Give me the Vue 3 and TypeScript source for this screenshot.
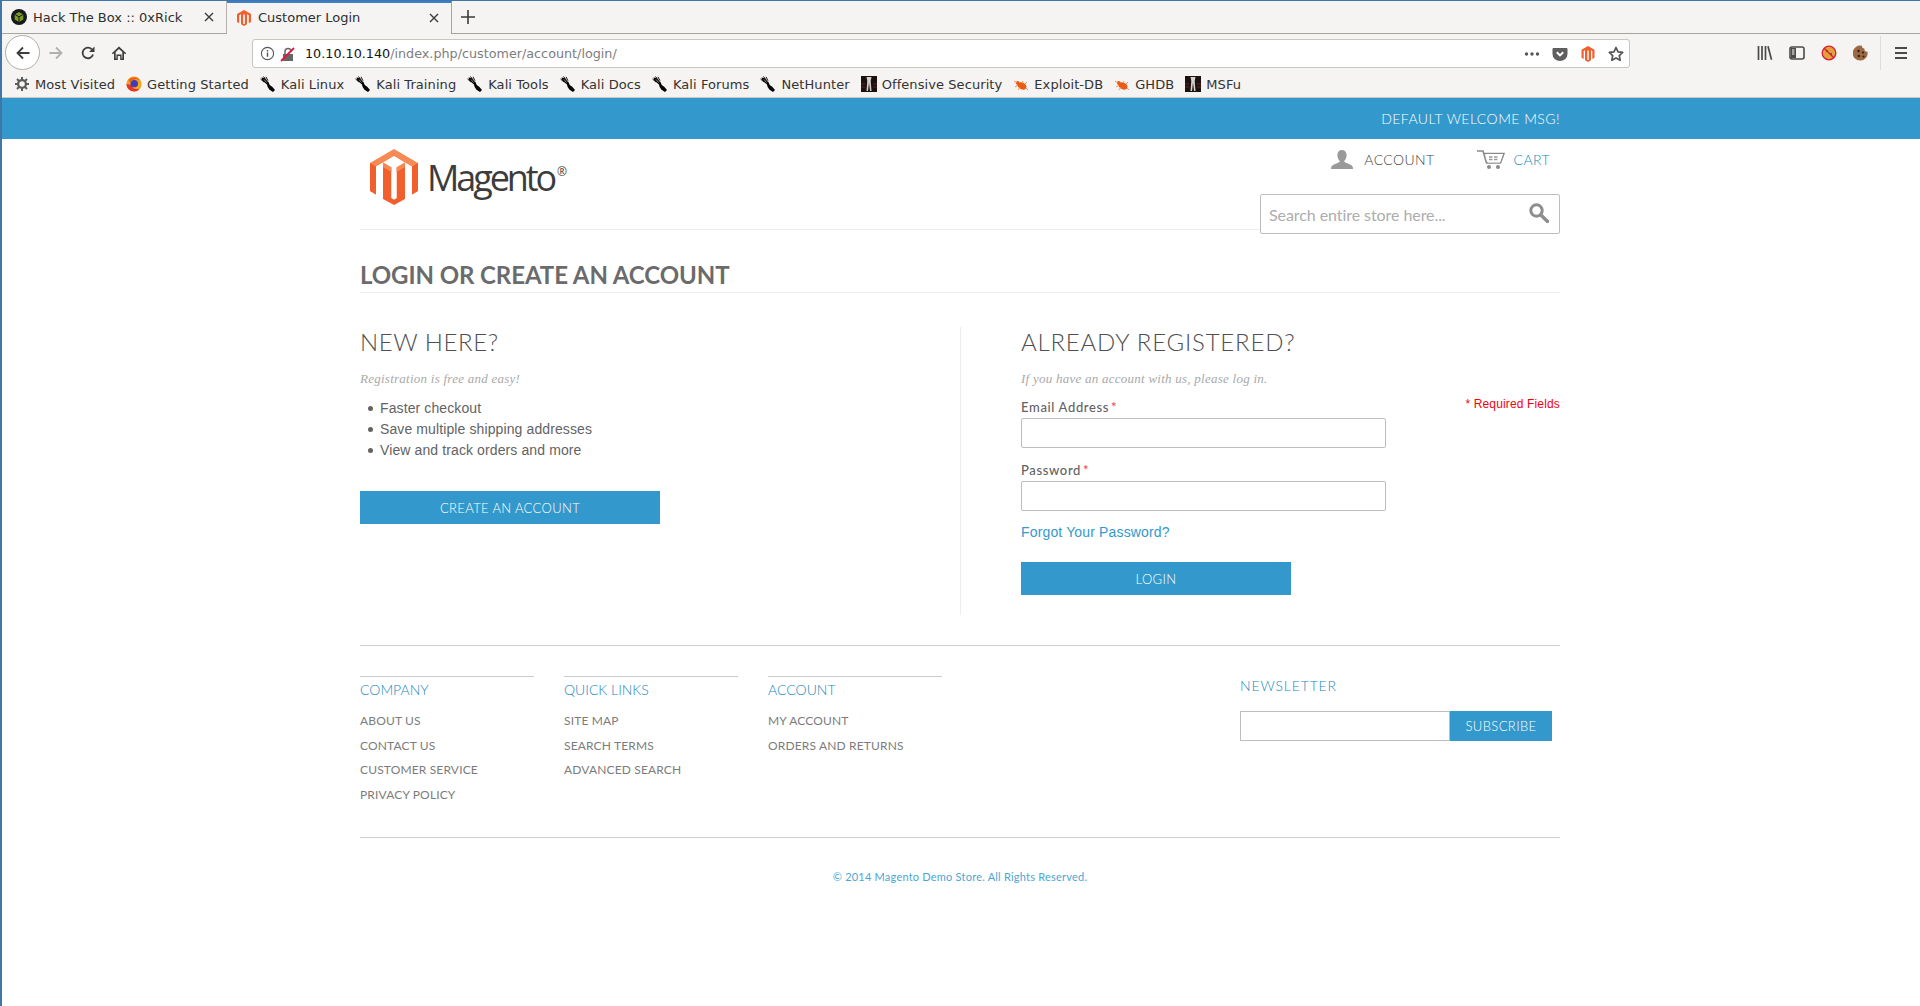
<script setup lang="ts">
const bookmarks = [
  { label: 'Kali Linux', icon: 'kali' },
  { label: 'Kali Training', icon: 'kali' },
  { label: 'Kali Tools', icon: 'kali' },
  { label: 'Kali Docs', icon: 'kali' },
  { label: 'Kali Forums', icon: 'kali' },
  { label: 'NetHunter', icon: 'kali' },
  { label: 'Offensive Security', icon: 'off' },
  { label: 'Exploit-DB', icon: 'bug' },
  { label: 'GHDB', icon: 'bug' },
  { label: 'MSFu', icon: 'off' }
]
const footerCols = [
  { title: 'COMPANY', links: ['ABOUT US', 'CONTACT US', 'CUSTOMER SERVICE', 'PRIVACY POLICY'] },
  { title: 'QUICK LINKS', links: ['SITE MAP', 'SEARCH TERMS', 'ADVANCED SEARCH'] },
  { title: 'ACCOUNT', links: ['MY ACCOUNT', 'ORDERS AND RETURNS'] }
]
</script>

<template>
  <div class="window">
    <div class="tabs">
      <div class="tab">
        <svg class="fav" viewBox="0 0 16 16"><circle cx="8" cy="8" r="8" fill="#151a1c"/><path d="M8 3l4.300 2.400v5.200L8 13l-4.300-2.400V5.400z" fill="#7f9a24"/><path d="M3.700 5.400L8 7.800l4.300-2.400M8 7.800V13" fill="none" stroke="#151a1c" stroke-width="1"/></svg>
        <span class="tab-title">Hack The Box :: 0xRick</span>
        <svg class="close" viewBox="0 0 10 10"><path d="M1 1l8 8M9 1l-8 8" stroke="#3b3b3b" stroke-width="1.400"/></svg>
      </div>
      <div class="tab active">
        <svg class="fav" viewBox="0 0 16 16"><path d="M8 0l7 4v8l-2.200 1.300V5.300L11 4.300v9.900L8 16l-3-1.800V4.300L3.200 5.300v8L1 12V4z" fill="#f1602c"/><path d="M7.200 4.500h1.600V14H7.200z" fill="#fff"/></svg>
        <span class="tab-title">Customer Login</span>
        <svg class="close" viewBox="0 0 10 10"><path d="M1 1l8 8M9 1l-8 8" stroke="#3b3b3b" stroke-width="1.400"/></svg>
      </div>
      <svg class="plus" viewBox="0 0 14 14"><path d="M7 0v14M0 7h14" stroke="#3b3b3b" stroke-width="1.600"/></svg>
    </div>

    <div class="toolbar">
      <div class="back">
        <svg viewBox="0 0 16 16" width="16" height="16"><path d="M14.500 8H2.500M8 2.500L2.500 8 8 13.500" fill="none" stroke="#3d3d3d" stroke-width="1.800"/></svg>
      </div>
      <svg class="tool fwd" viewBox="0 0 16 16"><path d="M1.500 8h12M8 2.500L13.500 8 8 13.500" fill="none" stroke="#b0b0b0" stroke-width="1.800"/></svg>
      <svg class="tool reload" viewBox="0 0 16 16"><path d="M13 9.500A5.300 5.300 0 1 1 11.800 4.300" fill="none" stroke="#3d3d3d" stroke-width="1.800"/><path d="M14.500 1.500V7H9z" fill="#3d3d3d"/></svg>
      <svg class="tool home" viewBox="0 0 16 16"><path d="M8 1.500L.8 8.200l1 1.100L3 8.200V15h3.800v-4h2.400v4H13V8.200l1.200 1.100 1-1.100z" fill="#3d3d3d"/><path d="M8 4L4.700 7v6.400h.7V9.500h5.200v3.900h.7V7z" fill="#f5f4f2"/></svg>
      <div class="urlbar">
        <svg class="uicon" viewBox="0 0 16 16"><circle cx="8" cy="8" r="6.500" fill="none" stroke="#555" stroke-width="1.200"/><path d="M8 7v4.500M8 4.200v1.600" stroke="#555" stroke-width="1.500"/></svg>
        <svg class="uicon lock" viewBox="0 0 16 16"><path d="M3 8h10v7H3z" fill="#666"/><path d="M5 8V5.500a3 3 0 0 1 6 0" fill="none" stroke="#666" stroke-width="1.500"/><path d="M1 15L14 2" stroke="#e0173f" stroke-width="1.800"/></svg>
        <span class="url"><span class="host">10.10.10.140</span><span class="path">/index.php/customer/account/login/</span></span>
        <span class="url-actions">
          <svg class="dots" viewBox="0 0 16 4"><circle cx="2.500" cy="2" r="1.700"/><circle cx="8" cy="2" r="1.700"/><circle cx="13.500" cy="2" r="1.700"/></svg>
          <svg class="uicon" viewBox="0 0 16 16"><path d="M1.500 2h13a1 1 0 0 1 1 1v5a7.500 7 0 0 1-15 0V3a1 1 0 0 1 1-1z" fill="#5f5f5f"/><path d="M4.800 6.200L8 9.400l3.200-3.200" fill="none" stroke="#fff" stroke-width="2"/></svg>
          <svg class="uicon" viewBox="0 0 16 16"><path d="M8 0l6.500 3.800v8L12.300 13V5.100L11 4.300v9.900L8 16l-3-1.800V4.300l-1.300.8V13l-2.200-1.200v-8z" fill="#f1602c"/><path d="M7.300 4.500h1.400V14H7.300z" fill="#fff"/></svg>
          <svg class="uicon" viewBox="0 0 16 16"><path d="M8 1.500l2 4.300 4.700.6-3.400 3.200.9 4.700L8 12l-4.200 2.300.9-4.700L1.300 6.400 6 5.800z" fill="none" stroke="#555" stroke-width="1.700" stroke-linejoin="round"/></svg>
        </span>
      </div>
      <div class="tool-right">
        <svg class="uicon" viewBox="0 0 16 16"><path d="M1.500 1v14M5 1v14M8.500 1v14" stroke="#4a4a4a" stroke-width="1.700"/><path d="M11 1.200l3.500 13.600" stroke="#4a4a4a" stroke-width="1.700"/></svg>
        <svg class="uicon" viewBox="0 0 16 16"><rect x="1" y="2" width="14" height="12" rx="2" fill="none" stroke="#4a4a4a" stroke-width="1.600"/><path d="M2 3h5v10H2z" fill="#4a4a4a"/><path d="M3 5h2.500M3 7h2.500M3 9h2.500" stroke="#fff"/></svg>
        <svg class="uicon" viewBox="0 0 16 16"><path d="M8 1.500a6.500 6.500 0 1 0 0 13 6.500 6.500 0 0 0 0-13z" fill="#e2a13c"/><circle cx="6" cy="6" r="1" fill="#6a3a10"/><circle cx="10" cy="9" r="1" fill="#6a3a10"/><circle cx="8" cy="8" r="6.800" fill="none" stroke="#d81e32" stroke-width="1.300"/><path d="M3.200 3.200l9.600 9.600" stroke="#d81e32" stroke-width="1.300"/></svg>
        <svg class="uicon" viewBox="0 0 16 16"><path d="M9 .8a2.500 2.500 0 0 0 2.500 2.800 2.500 2.500 0 0 0 3 3A7.500 7.500 0 1 1 9 .8z" fill="#9b6a45"/><circle cx="5.500" cy="6" r="1.200" fill="#2f1c10"/><circle cx="10" cy="7.500" r="1.100" fill="#2f1c10"/><circle cx="5.800" cy="11" r="1.200" fill="#2f1c10"/><circle cx="10.500" cy="11.500" r="1.100" fill="#2f1c10"/></svg>
        <i class="sep"></i>
        <svg class="uicon" viewBox="0 0 16 16"><path d="M2 3h12M2 8h12M2 13h12" stroke="#4a4a4a" stroke-width="1.800"/></svg>
      </div>
    </div>

    <div class="bookbar">
      <div class="bm most">
        <svg class="bi" viewBox="0 0 16 16"><circle cx="8" cy="8" r="3.900" fill="none" stroke="#5b5b5b" stroke-width="2.200"/><path d="M8 1v3M8 12v3M1 8h3M12 8h3M3 3l2.200 2.200M10.800 10.800L13 13M13 3l-2.200 2.200M5.200 10.800L3 13" stroke="#5b5b5b" stroke-width="2"/></svg>
        <span>Most Visited</span>
      </div>
      <div class="bm">
        <svg class="bi" viewBox="0 0 16 16"><circle cx="8" cy="8" r="7.600" fill="#f7a21b"/><path d="M.5 8a7.500 7.500 0 0 0 13.500 4.500C11 14 6 13 5 9z" fill="#e8322a"/><circle cx="8.200" cy="7.800" r="3.800" fill="#3f3db5"/><path d="M2.500 4C5 .5 11 0 14 4.500c-1.500-1-3.500-1.500-5-1-2 0-3.500 1-4 3-1 0-2-1-2.500-2.500z" fill="#f0601e"/><path d="M6 9.500c1 2.500 4 3 6 1.500 1.500-1 2-2.500 2-4-.5 3-3 5-5 4.500-1.300-.2-2.500-1-3-2z" fill="#ffce1f"/></svg>
        <span>Getting Started</span>
      </div>
      <div v-for="b in bookmarks" :key="b.label" class="bm">
        <svg v-if="b.icon === 'kali'" class="bi" viewBox="0 0 16 16"><path d="M1.500 1.500l3 .5 2.500 3 1.500 1 1 2.500 1.500 1.500 1 .5 3 3.500-2 2-3.500-2.200-2-3-.5-2.300L4 6 2 4z" fill="#050505"/><path d="M3.500.5L6.500 4.500M.5 3L4 6M6 .8l2 4" stroke="#050505" stroke-width=".9"/><path d="M4 3.500l2.500 3" stroke="#fff" stroke-width=".5"/></svg>
        <svg v-else-if="b.icon === 'off'" class="bi" viewBox="0 0 16 16"><rect width="16" height="16" fill="#1a1110"/><path d="M5.500 1h5l-.8 4 .8 10H9L8 6.500 7 15H5.500l.8-10z" fill="#d8d0cc"/><path d="M0 8h4M12 8h4M0 11h4M12 11h4" stroke="#7a2a20" stroke-width=".8"/></svg>
        <svg v-else class="bi" viewBox="0 0 16 16"><ellipse cx="9" cy="10" rx="4.600" ry="3.200" transform="rotate(25 9 10)" fill="#ea5b14"/><circle cx="4.800" cy="7" r="1.900" fill="#ea5b14"/><path d="M1 5l3 2M2 11l3-2M5 14l2-3M10 5l-1 2M14 6l-2 2M15 14l-2-2" stroke="#f08a4c" stroke-width=".9"/></svg>
        <span>{{ b.label }}</span>
      </div>
    </div>

    <div class="welcome"><div class="wrap welcome-in">DEFAULT WELCOME MSG!</div></div>

    <div class="wrap">
      <header class="head">
        <div class="logo">
          <svg class="mark" viewBox="0 0 48 56">
            <path d="M24 0L48 14v28l-6 3.500V17.500L35 13.500l-11-6.500-11 6.500-7 4V45.500L0 42V14z" fill="#f68a56"/>
            <path d="M0 14l6 3.500V45.500L0 42z" fill="#f1602c"/>
            <path d="M48 14l-6 3.500V45.500L48 42z" fill="#f1602c"/>
            <path d="M13 13.500L21.500 18.500V49L24 50.500V56L13 50V13.500z" fill="#f1602c"/>
            <path d="M35 13.500L26.500 18.500V49L24 50.500V56L35 50V13.500z" fill="#f1602c"/>
            <path d="M21.500 18.500L24 17l2.500 1.500V49L24 50.500 21.500 49z" fill="#fff"/>
            <path d="M13 13.500L21.500 18.500V23L13 18zM35 13.500L26.500 18.500V23L35 18z" fill="#f68a56"/>
          </svg>
          <span class="word">Magento<sup>®</sup></span>
        </div>
        <div class="head-right">
          <nav class="account">
            <a class="ac">
              <svg class="ac-user" viewBox="0 0 22 19"><path d="M11 0c3 0 4.600 2 4.600 5 0 2.500-1 4.700-2.200 5.700v1.300l5.600 2.500c2 .8 3 1.800 3 4.500H0c0-2.700 1-3.700 3-4.500L8.600 12v-1.300C7.400 9.700 6.400 7.500 6.400 5c0-3 1.600-5 4.600-5z" fill="#9a9a9a"/></svg>
              <span>ACCOUNT</span>
            </a>
            <a class="ac cart">
              <svg class="ac-cart" viewBox="0 0 28 19"><path d="M0 1h6l3.500 12h14L27 3.500H7" fill="none" stroke="#8a8a8a" stroke-width="1.600"/><path d="M9 4h17l-3 8.500H11z" fill="#fff"/><path d="M12 7h3.500M17 7h3.500M12 9.500h3.500M17 9.500h3.500" stroke="#9a9a9a" stroke-width="1.300"/><circle cx="12" cy="17" r="2" fill="#8a8a8a"/><circle cx="21" cy="17" r="2" fill="#8a8a8a"/></svg>
              <span>CART</span>
            </a>
          </nav>
          <div class="search">
            <span class="ph">Search entire store here...</span>
            <svg class="s-icon" viewBox="0 0 20 20"><circle cx="7.500" cy="7.500" r="5.700" fill="none" stroke="#8d8d8d" stroke-width="3"/><path d="M12 12l6.500 6.500" stroke="#8d8d8d" stroke-width="3.400" stroke-linecap="round"/></svg>
          </div>
        </div>
      </header>

      <h1 class="title">LOGIN OR CREATE AN ACCOUNT</h1>

      <section class="cols">
        <div class="col-new">
          <h2>NEW HERE?</h2>
          <p class="sub">Registration is free and easy!</p>
          <ul>
            <li>Faster checkout</li>
            <li>Save multiple shipping addresses</li>
            <li>View and track orders and more</li>
          </ul>
          <button class="btn create">CREATE AN ACCOUNT</button>
        </div>
        <div class="col-reg">
          <h2 class="reg-title">ALREADY REGISTERED?</h2>
          <p class="sub">If you have an account with us, please log in.</p>
          <div class="req">* Required Fields</div>
          <label class="lab">Email Address <em>*</em></label>
          <div class="input"></div>
          <label class="lab l2">Password <em>*</em></label>
          <div class="input"></div>
          <a class="forgot">Forgot Your Password?</a>
          <button class="btn login">LOGIN</button>
        </div>
      </section>

      <footer class="foot">
        <div class="foot-top">
          <div v-for="c in footerCols" :key="c.title" class="fcol">
            <h3>{{ c.title }}</h3>
            <a v-for="l in c.links" :key="l">{{ l }}</a>
          </div>
          <div class="news">
            <h3>NEWSLETTER</h3>
            <div class="news-row">
              <div class="news-in"></div>
              <button class="sub-btn">SUBSCRIBE</button>
            </div>
          </div>
        </div>
        <p class="copy">© 2014 Magento Demo Store. All Rights Reserved.</p>
      </footer>
    </div>
  </div>
</template>

<style>
html, body { margin: 0; background: #fff; }
</style>

<style scoped>
.window {
  width: 1920px;
  height: 1006px;
  box-sizing: border-box;
  border-left: 2px solid #3f78a8;
  border-top: 1px solid #3f78a8;
  overflow: hidden;
  background: #fff;
  font-family: "Liberation Sans", Arial, sans-serif;
}
.tabs {
  display: flex;
  align-items: stretch;
  height: 32px;
  background: #f5f4f2;
  border-bottom: 1px solid #a7a5a2;
  font-family: "DejaVu Sans", sans-serif;
  font-size: 13px;
  color: #2f2f2f;
}
.tab {
  width: 225px;
  box-sizing: border-box;
  display: flex;
  align-items: center;
  padding: 0 12px 0 9px;
  border-right: 1px solid #b5b3b0;
}
.tab.active {
  margin-bottom: -1px;
  background: #f5f4f2;
  border-top: 2px solid #3a7fc8;
  border-right: 1px solid #a7a5a2;
  padding: 0 12px 2px 9px;
}
.fav { width: 16px; height: 16px; flex: none; }
.tab-title { margin-left: 6px; flex: 1; white-space: nowrap; }
.close { width: 10px; height: 10px; flex: none; }
.plus { width: 14px; height: 14px; align-self: center; margin-left: 9px; }

.toolbar {
  display: flex;
  align-items: center;
  height: 37px;
  background: #f5f4f2;
}
.back {
  width: 33px;
  height: 33px;
  margin-left: 3px;
  border: 1px solid #b0aeab;
  border-radius: 50%;
  background: #fff;
  display: flex;
  align-items: center;
  justify-content: center;
}
.tool { width: 16px; height: 16px; flex: none; }
.fwd { margin-left: 8px; }
.reload { margin-left: 16px; }
.home { margin-left: 15px; }
.urlbar {
  margin-left: 125px;
  width: 1376px;
  height: 27px;
  margin-top: 2px;
  background: #fff;
  border: 1px solid #c9c5bf;
  border-radius: 3px;
  display: flex;
  align-items: center;
  font-family: "DejaVu Sans", sans-serif;
  font-size: 12.750px;
}
.uicon { width: 16px; height: 16px; flex: none; }
.urlbar > .uicon:first-child { margin-left: 7px; width: 15px; height: 15px; }
.lock { margin-left: 5px; }
.url { margin-left: 9px; flex: 1; }
.host { color: #141414; }
.path { color: #7d7d7d; }
.url-actions { display: flex; align-items: center; gap: 12px; margin-right: 5px; }
.dots { width: 16px; height: 4px; fill: #555; }
.tool-right {
  display: flex;
  align-items: center;
  gap: 16px;
  margin-left: 127px;
}
.sep { width: 1px; height: 34px; background: #dedcd9; margin: 0 -4px 0 -5px; }

.bookbar {
  display: flex;
  align-items: center;
  height: 26px;
  padding-left: 12px;
  background: #f5f4f2;
  border-bottom: 1px solid #c9c7c4;
  font-family: "DejaVu Sans", sans-serif;
  font-size: 13px;
  letter-spacing: .08px;
  color: #333;
  gap: 11px;
}
.bm { display: flex; align-items: center; gap: 5px; white-space: nowrap; }
.bi { width: 16px; height: 16px; flex: none; }

.wrap { width: 1200px; margin: 0 auto; transform: translateX(-1px); }
.welcome { background: #3399cc; height: 41px; }
.welcome-in {
  text-align: right;
  line-height: 41px;
  font-family: Lato, sans-serif;
  font-size: 14px;
  font-weight: 300;
  letter-spacing: .45px;
  color: #fff;
}
.head {
  display: flex;
  justify-content: space-between;
  height: 90px;
  border-bottom: 1px solid #ededed;
}
.logo { display: flex; align-items: flex-start; padding: 10px 0 0 10px; }
.mark { width: 48px; height: 56px; flex: none; }
.word {
  font-family: "Open Sans", sans-serif;
  font-size: 36px;
  font-weight: 500;
  line-height: 48px;
  letter-spacing: -3.100px;
  color: #3c3c3c;
  margin: 5px 0 0 9px;
}
.word sup { font-size: 12px; letter-spacing: 0; vertical-align: 15px; line-height: 0; margin-left: 3px; }
.head-right { width: 300px; display: flex; flex-direction: column; align-items: flex-end; }
.account {
  display: flex;
  flex: none;
  height: 55px;
  padding-top: 11px;
  box-sizing: border-box;
  align-items: flex-start;
  font-family: Lato, sans-serif;
  font-size: 14px;
  font-weight: 300;
  color: #444;
  margin-right: 10px;
}
.ac { display: flex; align-items: center; gap: 11px; }
.ac-user { width: 22px; height: 19px; }
.ac-cart { width: 28px; height: 19px; }
.cart { margin-left: 42px; gap: 9px; color: #2288bd; }
.account span { letter-spacing: .4px; }
.search {
  width: 300px;
  height: 40px;
  box-sizing: border-box;
  border: 1px solid #bdbdbd;
  border-radius: 2px;
  background: #fff;
  display: flex;
  align-items: center;
  justify-content: space-between;
  padding: 0 10px 0 8px;
  flex: none;
  position: relative;
  z-index: 1;
}
.ph { font-family: Lato, sans-serif; font-size: 16px; letter-spacing: -.07px; color: #adadad; }
.s-icon { width: 20px; height: 20px; margin-bottom: 2px; }
.title {
  margin: 0;
  height: 63px;
  box-sizing: border-box;
  border-bottom: 1px solid #ededed;
  padding-top: 29px;
  font-family: Lato, sans-serif;
  font-weight: 700;
  font-size: 24px;
  line-height: 31px;
  letter-spacing: -.08px;
  color: #6b6b6b;
}
.cols { display: flex; margin-top: 34px; height: 288px; }
.col-new { width: 601px; height: 288px; box-sizing: border-box; border-right: 1px solid #ededed; }
.col-reg { flex: 1; padding-left: 60px; position: relative; }
h2 {
  margin: 0;
  font-family: Lato, sans-serif;
  font-weight: 300;
  font-size: 24px;
  line-height: 30px;
  letter-spacing: .6px;
  color: #4f4f4f;
}
.reg-title { letter-spacing: .8px; }
.sub {
  margin: 14px 0 0;
  font-family: "Liberation Serif", serif;
  font-style: italic;
  font-size: 13px;
  line-height: 16px;
  letter-spacing: .25px;
  color: #a9a9a9;
}
ul { list-style: none; margin: 11px 0 0; padding: 0; }
li {
  position: relative;
  padding-left: 20px;
  font-size: 14px;
  line-height: 21px;
  letter-spacing: .11px;
  color: #636363;
}
li::before {
  content: "";
  position: absolute;
  left: 8px;
  top: 8px;
  width: 5px;
  height: 5px;
  border-radius: 50%;
  background: #636363;
}
.btn {
  display: block;
  border: 0;
  padding: 0;
  height: 33px;
  background: #3399cc;
  color: #fff;
  font-family: Lato, sans-serif;
  font-size: 13px;
  font-weight: 300;
  letter-spacing: .35px;
}
.create { width: 300px; margin-top: 30px; }
.req {
  position: absolute;
  right: 0;
  top: 69px;
  font-size: 12px;
  line-height: 16px;
  letter-spacing: .15px;
  color: #f5000f;
}
.lab {
  display: block;
  margin-top: 12px;
  font-family: Lato, sans-serif;
  font-size: 13px;
  font-weight: 500;
  line-height: 16px;
  letter-spacing: .65px;
  color: #636363;
}
.lab em { font-style: normal; color: #ef3b3b; margin-left: -2px; }
.l2 { margin-top: 14px; }
.input {
  width: 365px;
  height: 30px;
  box-sizing: border-box;
  margin-top: 3px;
  border: 1px solid #bdbdbd;
  border-radius: 2px;
  background: #fff;
}
.forgot {
  display: block;
  margin-top: 13px;
  font-size: 14px;
  line-height: 16px;
  letter-spacing: .15px;
  color: #3399cc;
}
.login { width: 270px; margin-top: 22px; }
.foot { margin-top: 30px; border-top: 1px solid #cfcfcf; }
.foot-top {
  display: flex;
  gap: 30px;
  height: 192px;
  box-sizing: border-box;
  padding-top: 30px;
  border-bottom: 1px solid #cfcfcf;
}
.fcol { width: 174px; border-top: 1px solid #cccccc; display: flex; flex-direction: column; }
h3 {
  margin: 0;
  font-family: Lato, sans-serif;
  font-weight: 300;
  font-size: 14px;
  line-height: 18px;
  color: #2288bd;
}
.fcol h3 { margin: 4px 0 14px; }
.fcol a {
  font-family: Lato, sans-serif;
  font-size: 12px;
  line-height: 16px;
  margin-bottom: 8.500px;
  letter-spacing: .15px;
  color: #7c7c7c;
}
.news { margin-left: 268px; width: 312px; }
.news h3 { letter-spacing: .85px; margin-top: 1px; }
.news-row { display: flex; margin-top: 16px; }
.news-in { width: 210px; height: 30px; box-sizing: border-box; border: 1px solid #bdbdbd; background: #fff; }
.sub-btn {
  width: 102px;
  height: 30px;
  border: 0;
  padding: 0;
  background: #3399cc;
  color: #fff;
  font-family: Lato, sans-serif;
  font-size: 13px;
  font-weight: 300;
  letter-spacing: .4px;
}
.copy {
  margin: 32px 0 0;
  text-align: center;
  font-family: Lato, sans-serif;
  font-size: 11px;
  line-height: 14px;
  letter-spacing: .22px;
  color: #4ba6d4;
}
</style>
